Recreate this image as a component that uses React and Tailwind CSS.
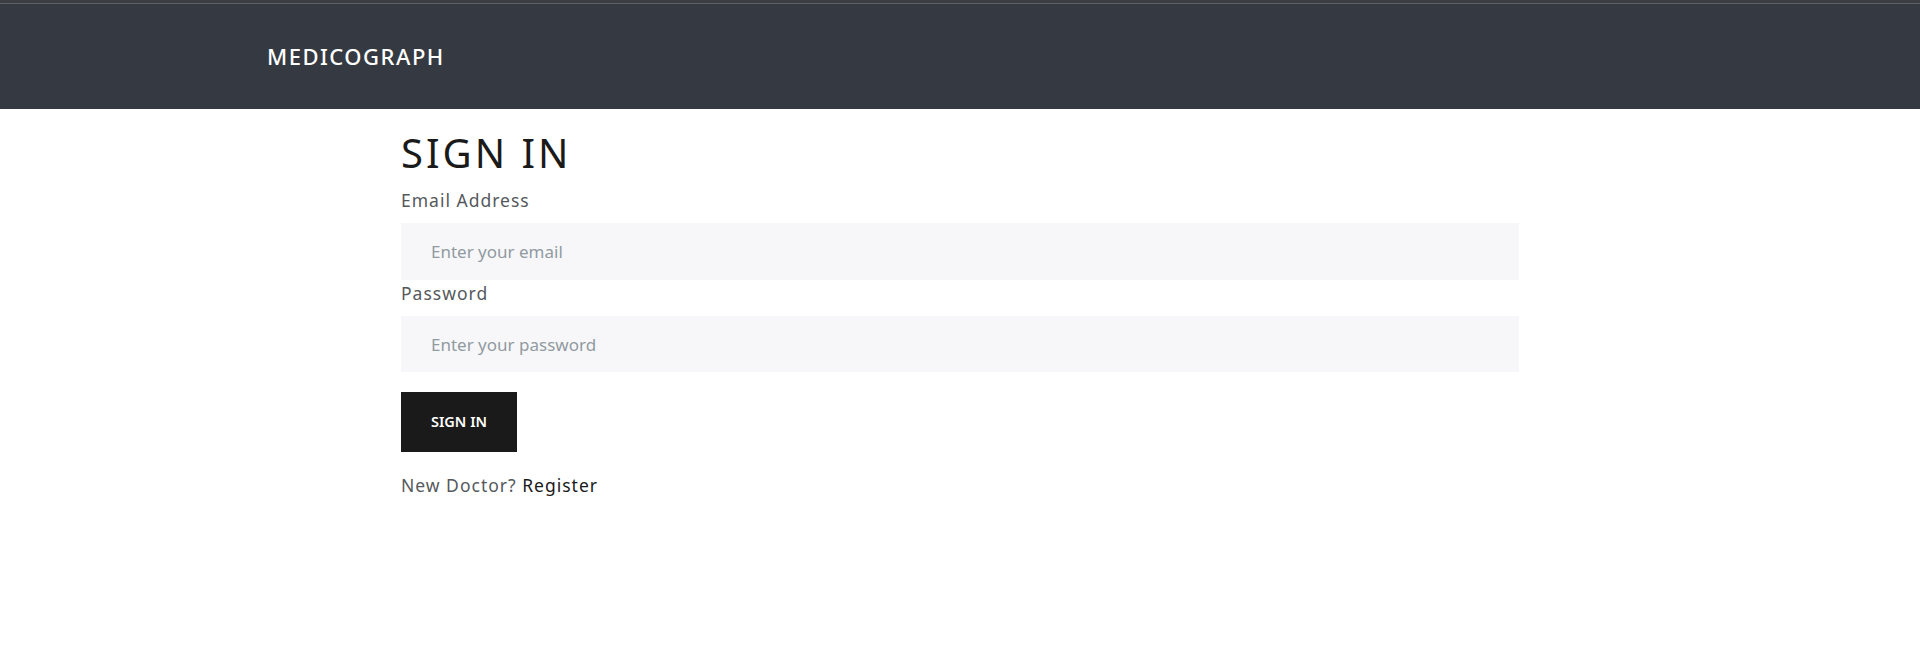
export default function App() {
  return (
    <div className="min-h-[660px] bg-white font-['Noto_Sans',sans-serif]">
      {/* top bar */}
      <div className="h-[3px] bg-[#3b3d42]" />
      <div className="h-px bg-[#5f6063]" />
      <header className="flex h-[105px] items-center bg-[#353a42] pl-[267px]">
        <span className="text-[22px] font-medium tracking-[1.5px] text-white">
          MEDICOGRAPH
        </span>
      </header>

      <main className="mx-auto w-[1118px] pt-[20px]">
        <h1 className="text-[40px] leading-[48px] tracking-[3px] text-[#1a1a1a]">
          SIGN IN
        </h1>
        <form className="mt-[10px] flex flex-col">
          <label className="mb-[10px] text-[17.5px] leading-[26px] tracking-[1px] text-[#55595c]">
            Email Address
          </label>
          <input
            type="email"
            placeholder="Enter your email"
            className="h-[57px] bg-[#f7f7f9] px-[30px] text-[17px] text-[#55595c] outline-none placeholder:text-[#919aa1]"
          />
          <label className="mb-[10px] text-[17.5px] leading-[26px] tracking-[1px] text-[#55595c]">
            Password
          </label>
          <input
            type="password"
            placeholder="Enter your password"
            className="h-[56px] bg-[#f7f7f9] px-[30px] text-[17px] text-[#55595c] outline-none placeholder:text-[#919aa1]"
          />
          <div className="mt-[20px]">
            <button
              type="button"
              className="h-[60px] bg-[#1a1a1a] px-[30px] text-[14.5px] font-semibold text-white"
            >
              SIGN IN
            </button>
          </div>
          <p className="mt-[20px] text-[17.5px] tracking-[1px] text-[#55595c]">
            New Doctor? <a href="#" className="text-[#1a1a1a]">Register</a>
          </p>
        </form>
      </main>
    </div>
  );
}
